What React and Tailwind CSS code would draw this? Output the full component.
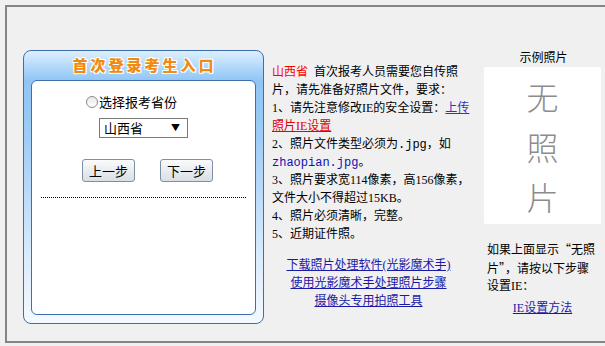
import React from "react";

const cn = '"Liberation Serif","Noto Sans CJK SC",sans-serif';
const sans = '"Noto Sans CJK SC",sans-serif';

const Line = ({ children }) => (
  <div className="h-[18px] leading-[18px] whitespace-nowrap">{children}</div>
);

const LoginPanel = () => (
  <div className="w-[241px] h-[274px] rounded-[8px] border border-[#3d6fae] bg-[linear-gradient(#dcefff_0%,#8fc5f5_11%,#9ccbf6_30%,#d9ebfc_75%,#f4f9ff_100%)] flex flex-col">
    {/* title */}
    <div
      className="h-[29px] flex items-center justify-center pl-[2px] text-[15px] font-black tracking-[3px] text-[#f28a10] [text-shadow:1px_1px_0_#fff,-1px_-1px_0_#fff,1px_-1px_0_#fff,-1px_1px_0_#fff]"
      style={{ fontFamily: sans }}
    >
      首次登录考生入口
    </div>
    {/* inner box */}
    <div className="mx-[7px] h-[235px] rounded-[6px] border border-[#3d6fae] bg-white flex flex-col items-center" style={{ fontFamily: sans }}>
      <div className="mt-[12px] mr-[24px] flex items-center gap-[1px] text-[13px] text-black leading-[18px]">
        <span className="w-[12px] h-[12px] rounded-full border border-[#8a8a8a] bg-[linear-gradient(#e8e8e8,#fff)]" />
        选择报考省份
      </div>
      <div className="mt-[7px] w-[89px] h-[20px] border border-[#7a7a7a] bg-white flex items-center justify-between pl-[4px] pr-[7px] text-[13px] text-black">
        <span>山西省</span>
        <span className="text-[9px]">▼</span>
      </div>
      <div className="mt-[21px] ml-[8px] flex gap-[25px]">
        <button className="w-[53px] h-[23px] rounded-[3px] border border-[#7f8fa3] bg-[linear-gradient(#fbfbfb,#e9edf1_50%,#d9dfe6)] text-[13px] text-black">
          上一步
        </button>
        <button className="w-[53px] h-[23px] rounded-[3px] border border-[#7f8fa3] bg-[linear-gradient(#fbfbfb,#e9edf1_50%,#d9dfe6)] text-[13px] text-black">
          下一步
        </button>
      </div>
      <div className="mt-[15px] w-[205px] border-t border-dotted border-black" />
    </div>
  </div>
);

const Notes = () => (
  <div className="ml-[8px] w-[195px] pt-[13px] text-[12px] text-black" style={{ fontFamily: cn }}>
    <Line>
      <span className="text-[#ff0000]">山西省</span>&nbsp; 首次报考人员需要您自传照
    </Line>
    <Line>片，请先准备好照片文件，要求：</Line>
    <Line>
      1、请先注意修改IE的安全设置：
      <a href="#" className="underline decoration-[#7a1a9a]">
        <span className="text-[#3b2fc0]">上传</span>
      </a>
    </Line>
    <Line>
      <a href="#" className="underline decoration-[#7a1a9a] text-[#e00000]">照片IE设置</a>
    </Line>
    <Line>
      2、照片文件类型必须为<span style={{ fontFamily: '"Liberation Mono",monospace' }}>.jpg</span>，如
    </Line>
    <Line>
      <span className="text-[#1010b0]" style={{ fontFamily: '"Liberation Mono",monospace' }}>zhaopian.jpg</span>。
    </Line>
    <Line>3、照片要求宽114像素，高156像素，</Line>
    <Line>文件大小不得超过15KB。</Line>
    <Line>4、照片必须清晰，完整。</Line>
    <Line>5、近期证件照。</Line>
    <div className="mt-[13px] flex flex-col items-center pr-[2px] text-[#1a1aa8]">
      <a href="#" className="underline h-[18px] leading-[18px]">下载照片处理软件(光影魔术手)</a>
      <a href="#" className="underline h-[18px] leading-[18px]">使用光影魔术手处理照片步骤</a>
      <a href="#" className="underline h-[18px] leading-[18px]">摄像头专用拍照工具</a>
    </div>
  </div>
);

const Sample = () => (
  <div className="ml-[17px] w-[117px] flex flex-col text-[12px] text-black" style={{ fontFamily: cn }}>
    <div className="h-[16px] leading-[16px] text-center pl-[2px]">示例照片</div>
    <div className="mt-[1px] h-[157px] rounded-[2px] bg-white flex flex-col items-center pt-[4px] text-[32px] font-light leading-[50px] text-[#8c8c8c]" style={{ fontFamily: sans }}>
      <span>无</span>
      <span>照</span>
      <span>片</span>
    </div>
    <div className="mt-[16px] pl-[3px] leading-[17px] whitespace-nowrap">
      <div>
        如果上面显示<span style={{ fontFamily: sans }}>“</span>无照
      </div>
      <div>
        片<span style={{ fontFamily: sans }}>”</span>，请按以下步骤
      </div>
      <div>设置IE：</div>
    </div>
    <a href="#" className="mt-[5px] h-[17px] leading-[17px] text-center underline text-[#1a1aa8]">
      IE设置方法
    </a>
  </div>
);

export default function App() {
  return (
    <div className="w-[605px] h-[346px] bg-[#f0f0f0] pt-[5px] pl-[5px] overflow-hidden">
      <div className="h-[338px] border-t-2 border-l-2 border-b-2 border-[#858585] bg-[#f0f0f0] flex items-start pl-[16px] pt-[43px]">
        <LoginPanel />
        <Notes />
        <Sample />
      </div>
    </div>
  );
}
